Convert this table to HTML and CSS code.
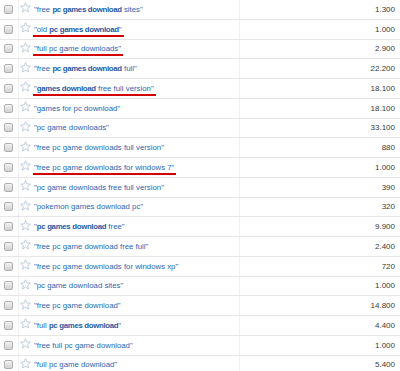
FILE: index.html
```html
<!DOCTYPE html>
<html>
<head>
<meta charset="utf-8">
<link rel="stylesheet" href="styles.css">
</head>
<body>
<div class="table">
  <div class="row"><div class="c-check"><span class="box"></span></div><div class="c-kw"><svg class="star" viewBox="0 0 12 12"><path d="M6 0.8 L7.5 4.3 L11.3 4.6 L8.4 7.1 L9.3 10.9 L6 8.9 L2.7 10.9 L3.6 7.1 L0.7 4.6 L4.5 4.3 Z"/></svg><span class="kw">"free <b>pc games download</b> sites"</span></div><div class="c-num">1.300</div></div>
  <div class="row"><div class="c-check"><span class="box"></span></div><div class="c-kw"><svg class="star" viewBox="0 0 12 12"><path d="M6 0.8 L7.5 4.3 L11.3 4.6 L8.4 7.1 L9.3 10.9 L6 8.9 L2.7 10.9 L3.6 7.1 L0.7 4.6 L4.5 4.3 Z"/></svg><span class="kw marked">"old <b>pc games download</b>"</span></div><div class="c-num">1.000</div></div>
  <div class="row"><div class="c-check"><span class="box"></span></div><div class="c-kw"><svg class="star" viewBox="0 0 12 12"><path d="M6 0.8 L7.5 4.3 L11.3 4.6 L8.4 7.1 L9.3 10.9 L6 8.9 L2.7 10.9 L3.6 7.1 L0.7 4.6 L4.5 4.3 Z"/></svg><span class="kw marked">"full pc game downloads"</span></div><div class="c-num">2.900</div></div>
  <div class="row"><div class="c-check"><span class="box"></span></div><div class="c-kw"><svg class="star" viewBox="0 0 12 12"><path d="M6 0.8 L7.5 4.3 L11.3 4.6 L8.4 7.1 L9.3 10.9 L6 8.9 L2.7 10.9 L3.6 7.1 L0.7 4.6 L4.5 4.3 Z"/></svg><span class="kw">"free <b>pc games download</b> full"</span></div><div class="c-num">22.200</div></div>
  <div class="row"><div class="c-check"><span class="box"></span></div><div class="c-kw"><svg class="star" viewBox="0 0 12 12"><path d="M6 0.8 L7.5 4.3 L11.3 4.6 L8.4 7.1 L9.3 10.9 L6 8.9 L2.7 10.9 L3.6 7.1 L0.7 4.6 L4.5 4.3 Z"/></svg><span class="kw marked">"<b>games download</b> free full version"</span></div><div class="c-num">18.100</div></div>
  <div class="row"><div class="c-check"><span class="box"></span></div><div class="c-kw"><svg class="star" viewBox="0 0 12 12"><path d="M6 0.8 L7.5 4.3 L11.3 4.6 L8.4 7.1 L9.3 10.9 L6 8.9 L2.7 10.9 L3.6 7.1 L0.7 4.6 L4.5 4.3 Z"/></svg><span class="kw">"games for pc download"</span></div><div class="c-num">18.100</div></div>
  <div class="row"><div class="c-check"><span class="box"></span></div><div class="c-kw"><svg class="star" viewBox="0 0 12 12"><path d="M6 0.8 L7.5 4.3 L11.3 4.6 L8.4 7.1 L9.3 10.9 L6 8.9 L2.7 10.9 L3.6 7.1 L0.7 4.6 L4.5 4.3 Z"/></svg><span class="kw">"pc game downloads"</span></div><div class="c-num">33.100</div></div>
  <div class="row"><div class="c-check"><span class="box"></span></div><div class="c-kw"><svg class="star" viewBox="0 0 12 12"><path d="M6 0.8 L7.5 4.3 L11.3 4.6 L8.4 7.1 L9.3 10.9 L6 8.9 L2.7 10.9 L3.6 7.1 L0.7 4.6 L4.5 4.3 Z"/></svg><span class="kw">"free pc game downloads full version"</span></div><div class="c-num">880</div></div>
  <div class="row"><div class="c-check"><span class="box"></span></div><div class="c-kw"><svg class="star" viewBox="0 0 12 12"><path d="M6 0.8 L7.5 4.3 L11.3 4.6 L8.4 7.1 L9.3 10.9 L6 8.9 L2.7 10.9 L3.6 7.1 L0.7 4.6 L4.5 4.3 Z"/></svg><span class="kw marked">"free pc game downloads for windows 7"</span></div><div class="c-num">1.000</div></div>
  <div class="row"><div class="c-check"><span class="box"></span></div><div class="c-kw"><svg class="star" viewBox="0 0 12 12"><path d="M6 0.8 L7.5 4.3 L11.3 4.6 L8.4 7.1 L9.3 10.9 L6 8.9 L2.7 10.9 L3.6 7.1 L0.7 4.6 L4.5 4.3 Z"/></svg><span class="kw">"pc game downloads free full version"</span></div><div class="c-num">390</div></div>
  <div class="row"><div class="c-check"><span class="box"></span></div><div class="c-kw"><svg class="star" viewBox="0 0 12 12"><path d="M6 0.8 L7.5 4.3 L11.3 4.6 L8.4 7.1 L9.3 10.9 L6 8.9 L2.7 10.9 L3.6 7.1 L0.7 4.6 L4.5 4.3 Z"/></svg><span class="kw">"pokemon games download pc"</span></div><div class="c-num">320</div></div>
  <div class="row"><div class="c-check"><span class="box"></span></div><div class="c-kw"><svg class="star" viewBox="0 0 12 12"><path d="M6 0.8 L7.5 4.3 L11.3 4.6 L8.4 7.1 L9.3 10.9 L6 8.9 L2.7 10.9 L3.6 7.1 L0.7 4.6 L4.5 4.3 Z"/></svg><span class="kw">"<b>pc games download</b> free"</span></div><div class="c-num">9.900</div></div>
  <div class="row"><div class="c-check"><span class="box"></span></div><div class="c-kw"><svg class="star" viewBox="0 0 12 12"><path d="M6 0.8 L7.5 4.3 L11.3 4.6 L8.4 7.1 L9.3 10.9 L6 8.9 L2.7 10.9 L3.6 7.1 L0.7 4.6 L4.5 4.3 Z"/></svg><span class="kw">"free pc game download free full"</span></div><div class="c-num">2.400</div></div>
  <div class="row"><div class="c-check"><span class="box"></span></div><div class="c-kw"><svg class="star" viewBox="0 0 12 12"><path d="M6 0.8 L7.5 4.3 L11.3 4.6 L8.4 7.1 L9.3 10.9 L6 8.9 L2.7 10.9 L3.6 7.1 L0.7 4.6 L4.5 4.3 Z"/></svg><span class="kw">"free pc game downloads for windows xp"</span></div><div class="c-num">720</div></div>
  <div class="row"><div class="c-check"><span class="box"></span></div><div class="c-kw"><svg class="star" viewBox="0 0 12 12"><path d="M6 0.8 L7.5 4.3 L11.3 4.6 L8.4 7.1 L9.3 10.9 L6 8.9 L2.7 10.9 L3.6 7.1 L0.7 4.6 L4.5 4.3 Z"/></svg><span class="kw">"pc game download sites"</span></div><div class="c-num">1.000</div></div>
  <div class="row"><div class="c-check"><span class="box"></span></div><div class="c-kw"><svg class="star" viewBox="0 0 12 12"><path d="M6 0.8 L7.5 4.3 L11.3 4.6 L8.4 7.1 L9.3 10.9 L6 8.9 L2.7 10.9 L3.6 7.1 L0.7 4.6 L4.5 4.3 Z"/></svg><span class="kw">"free pc game download"</span></div><div class="c-num">14.800</div></div>
  <div class="row"><div class="c-check"><span class="box"></span></div><div class="c-kw"><svg class="star" viewBox="0 0 12 12"><path d="M6 0.8 L7.5 4.3 L11.3 4.6 L8.4 7.1 L9.3 10.9 L6 8.9 L2.7 10.9 L3.6 7.1 L0.7 4.6 L4.5 4.3 Z"/></svg><span class="kw">"full <b>pc games download</b>"</span></div><div class="c-num">4.400</div></div>
  <div class="row"><div class="c-check"><span class="box"></span></div><div class="c-kw"><svg class="star" viewBox="0 0 12 12"><path d="M6 0.8 L7.5 4.3 L11.3 4.6 L8.4 7.1 L9.3 10.9 L6 8.9 L2.7 10.9 L3.6 7.1 L0.7 4.6 L4.5 4.3 Z"/></svg><span class="kw">"free full pc game download"</span></div><div class="c-num">1.000</div></div>
  <div class="row"><div class="c-check"><span class="box"></span></div><div class="c-kw"><svg class="star" viewBox="0 0 12 12"><path d="M6 0.8 L7.5 4.3 L11.3 4.6 L8.4 7.1 L9.3 10.9 L6 8.9 L2.7 10.9 L3.6 7.1 L0.7 4.6 L4.5 4.3 Z"/></svg><span class="kw">"full pc game download"</span></div><div class="c-num">5.400</div></div>
</div>
</body>
</html>
```

FILE: styles.css
```css
html, body {
  margin: 0;
  padding: 0;
  background: #ffffff;
}

.table {
  width: 400px;
  font-family: "Liberation Sans", Arial, sans-serif;
  font-size: 8px;
}

.row {
  display: grid;
  grid-template-columns: 19px 221px 1fr;
  height: 19.76px;
  box-sizing: border-box;
  border-bottom: 1px solid #e6e6e6;
}

.c-check {
  border-right: 1px solid #f0f0f0;
  display: flex;
  align-items: center;
  padding-left: 4px;
}

.box {
  width: 7px;
  height: 7px;
  border: 1px solid #b0b0b0;
  border-radius: 2px;
  background: linear-gradient(#f2f2f2, #d2d2d2);
}

.c-kw {
  border-right: 1px solid #f0f0f0;
  display: flex;
  align-items: center;
  gap: 3px;
  padding-left: 1px;
}

.star {
  width: 11px;
  height: 11px;
  margin-top: -3px;
  fill: none;
  stroke: #b3c3d4;
  stroke-width: 0.9;
  stroke-linejoin: round;
  flex: none;
}

.kw {
  position: relative;
  color: #2a67b5;
  font-size: 7.8px;
  white-space: nowrap;
}

.kw b {
  color: #1f5aa6;
  letter-spacing: -0.3px;
}

.marked::after {
  content: "";
  position: absolute;
  left: -1px;
  right: -2px;
  bottom: -3px;
  height: 2px;
  background: #d40000;
}

.c-num {
  display: flex;
  align-items: center;
  justify-content: flex-end;
  padding-right: 5px;
  color: #3a3a3a;
}
```
